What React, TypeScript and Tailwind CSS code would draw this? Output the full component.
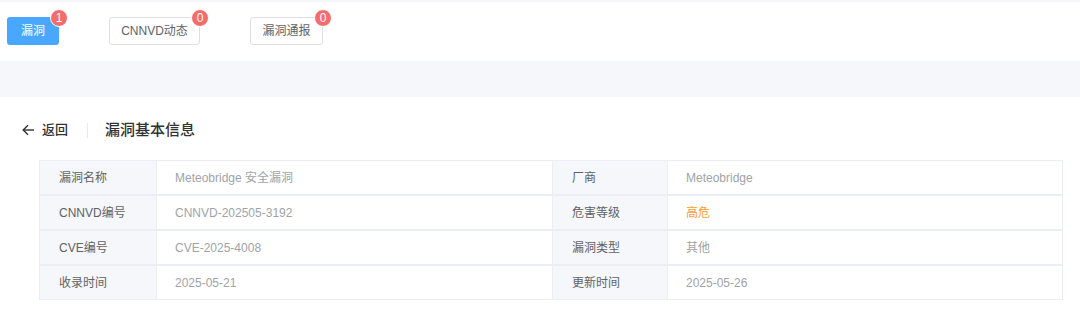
import React from "react";

const font = { fontFamily: '"Liberation Sans", "Noto Sans CJK SC", sans-serif' };

function TabButton({ label, count, active, width }: { label: string; count: number; active?: boolean; width: string }) {
  return (
    <div className={`relative ${width} h-[28px]`}>
      <div
        className={
          active
            ? "w-full h-full rounded-[3px] bg-[#49a7ff] text-white text-[12px] flex items-center justify-center"
            : "w-full h-full rounded-[3px] bg-white border border-[#dcdfe6] text-[#606266] text-[12px] flex items-center justify-center"
        }
      >
        {label}
      </div>
      <div className="absolute top-[-8px] right-[-9px] w-[18px] h-[18px] rounded-full bg-[#f56c6c] border border-white text-white text-[12px] leading-none flex items-center justify-center">
        {count}
      </div>
    </div>
  );
}

const rows: [string, React.ReactNode, string, React.ReactNode][] = [
  ["漏洞名称", "Meteobridge 安全漏洞", "厂商", "Meteobridge"],
  ["CNNVD编号", "CNNVD-202505-3192", "危害等级", <span className="text-[#ff9a2e]">高危</span>],
  ["CVE编号", "CVE-2025-4008", "漏洞类型", "其他"],
  ["收录时间", "2025-05-21", "更新时间", "2025-05-26"],
];

export default function App() {
  return (
    <div className="w-[1080px] h-[322px] bg-white overflow-hidden" style={font}>
      <div className="h-[2px] bg-[#f5f6fa]" />
      <div className="h-[59px] flex items-start pt-[15px] pl-[7px] gap-[50px]">
        <TabButton label="漏洞" count={1} active width="w-[52px]" />
        <TabButton label="CNNVD动态" count={0} width="w-[91px]" />
        <TabButton label="漏洞通报" count={0} width="w-[73px]" />
      </div>
      <div className="h-[36px] bg-[#f6f7fb]" />
      <div className="h-[63px] flex items-center pl-[22px] pt-[3px]">
        <svg width="13" height="12" viewBox="0 0 13 12" fill="none" stroke="#303133" strokeWidth="1.4">
          <path d="M12 6H1.5" />
          <path d="M6 1.2L1.2 6L6 10.8" />
        </svg>
        <span className="ml-[7px] text-[13px] font-medium text-[#303133]">返回</span>
        <div className="ml-[19px] w-px h-[15px] bg-[#e8e8e8]" />
        <span className="ml-[17px] text-[15px] font-medium text-[#303133]">漏洞基本信息</span>
      </div>
      <div className="ml-[39px] w-[1024px] border border-[#ebeef5]">
        {rows.map((r, i) => (
          <div
            key={i}
            className={`grid grid-cols-[117px_395px_116px_1fr] h-[33px] text-[12px] ${i < rows.length - 1 ? "border-b-2 border-[#ebeef5] box-content" : ""}`}
          >
            <div className="bg-[#f5f7fa] text-[#606266] flex items-center pl-[19px] border-r border-[#ebeef5]">{r[0]}</div>
            <div className="text-[#a0a3a8] flex items-center pl-[18px]">{r[1]}</div>
            <div className="bg-[#f5f7fa] text-[#606266] flex items-center pl-[19px] border-x border-[#ebeef5]">{r[2]}</div>
            <div className="text-[#a0a3a8] flex items-center pl-[18px]">{r[3]}</div>
          </div>
        ))}
      </div>
    </div>
  );
}
